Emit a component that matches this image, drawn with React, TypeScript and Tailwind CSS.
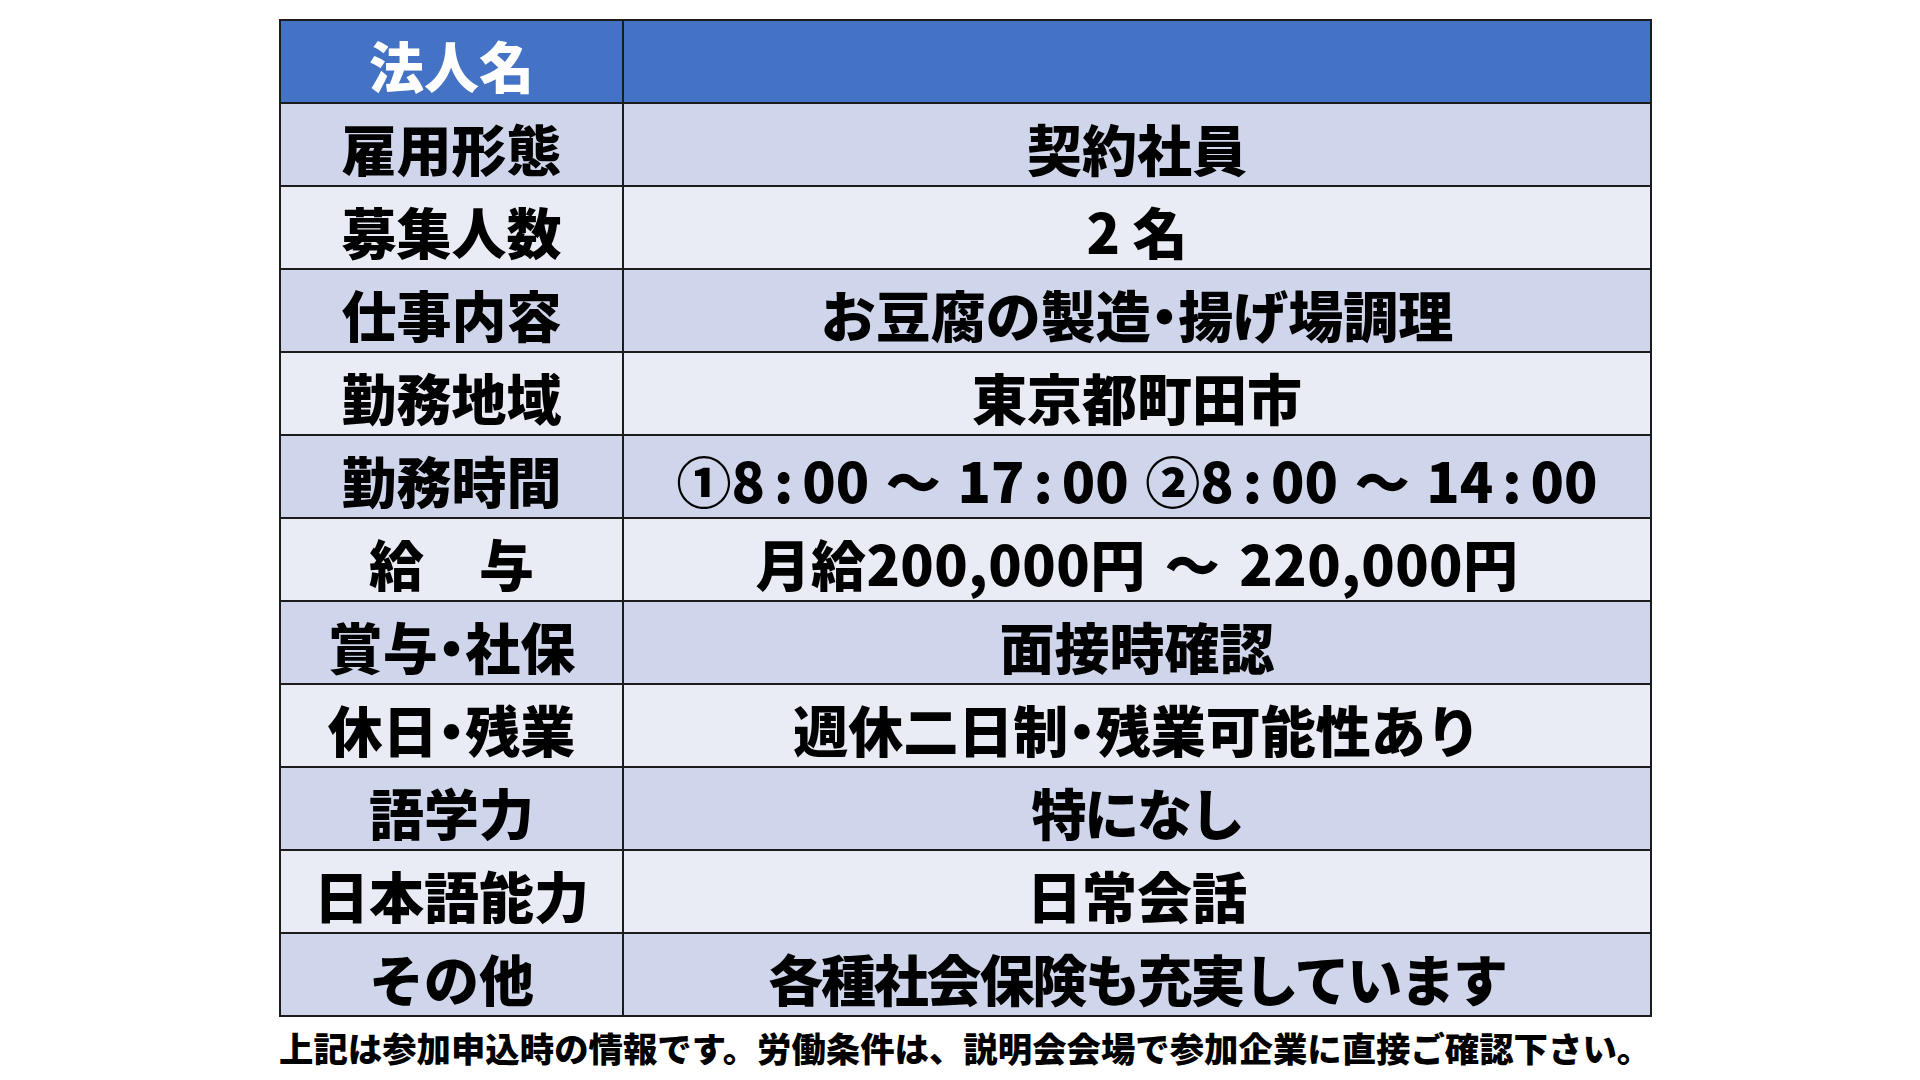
import React from 'react'

type Row = {
    label: React.ReactNode,
    value: React.ReactNode,
    tight?: boolean,
}

// half-width middle dot, as in the source slide
const Dot = () => <span className="[font-feature-settings:'halt']">・</span>
const Colon = () => <span className="mx-[9px]">:</span>

const rows: Row[] = [
    { label: '雇用形態', value: '契約社員' },
    { label: '募集人数', value: '2 名' },
    { label: '仕事内容', value: <>お豆腐の製造<Dot />揚げ場調理</> },
    { label: '勤務地域', value: '東京都町田市' },
    {
        label: '勤務時間',
        value: (
            <span className="[word-spacing:4px]">
                ①8<Colon />00 ～ 17<Colon />00 ②8<Colon />00 ～ 14<Colon />00
            </span>
        ),
    },
    {
        label: '給　与',
        value: <span className="[word-spacing:6px] tracking-[0.5px]">月給200,000円 ～ 220,000円</span>,
    },
    { label: <>賞与<Dot />社保</>, value: '面接時確認' },
    { label: <>休日<Dot />残業</>, value: <>週休二日制<Dot />残業可能性あり</> },
    { label: '語学力', value: '特になし', tight: true },
    { label: '日本語能力', value: '日常会話' },
    { label: 'その他', value: '各種社会保険も充実しています', tight: true },
]

const App = () => {
    return (
        <div className="w-[1920px] h-[1080px] bg-white text-black font-['Noto_Sans_CJK_JP',sans-serif] overflow-hidden">
            <div className="ml-[279px] pt-[19px] w-[1373px]">
                <div className="border-2 border-[#1c1c1c] flex flex-col">
                    <div className="flex h-[83px] bg-[#4472c4] border-b-2 border-[#1c1c1c]">
                        <div className="w-[343px] border-r-2 border-[#1c1c1c] flex items-center justify-center pt-[6px] text-[55px] leading-none font-black text-white">
                            法人名
                        </div>
                        <div className="flex-1" />
                    </div>
                    {rows.map((row, i) => (
                        <div
                            key={i}
                            className={`flex ${i % 2 === 0 ? 'bg-[#cfd5ea]' : 'bg-[#e9ebf5]'} ${i < rows.length - 1 ? 'h-[83px] border-b-2 border-[#1c1c1c]' : 'h-[81px]'}`}
                        >
                            <div className="w-[343px] border-r-2 border-[#1c1c1c] flex items-center justify-center pt-[6px] text-[55px] leading-none font-black whitespace-pre">
                                {row.label}
                            </div>
                            <div className={`flex-1 flex items-center justify-center pt-[6px] text-[55px] leading-none font-black whitespace-pre ${row.tight ? 'tracking-[-0.04em]' : ''}`}>
                                {row.value}
                            </div>
                        </div>
                    ))}
                </div>
                <p className="mt-[13px] text-[34.4px] leading-none font-black whitespace-nowrap">
                    上記は参加申込時の情報です。労働条件は、説明会会場で参加企業に直接ご確認下さい。
                </p>
            </div>
        </div>
    )
}

export default App
